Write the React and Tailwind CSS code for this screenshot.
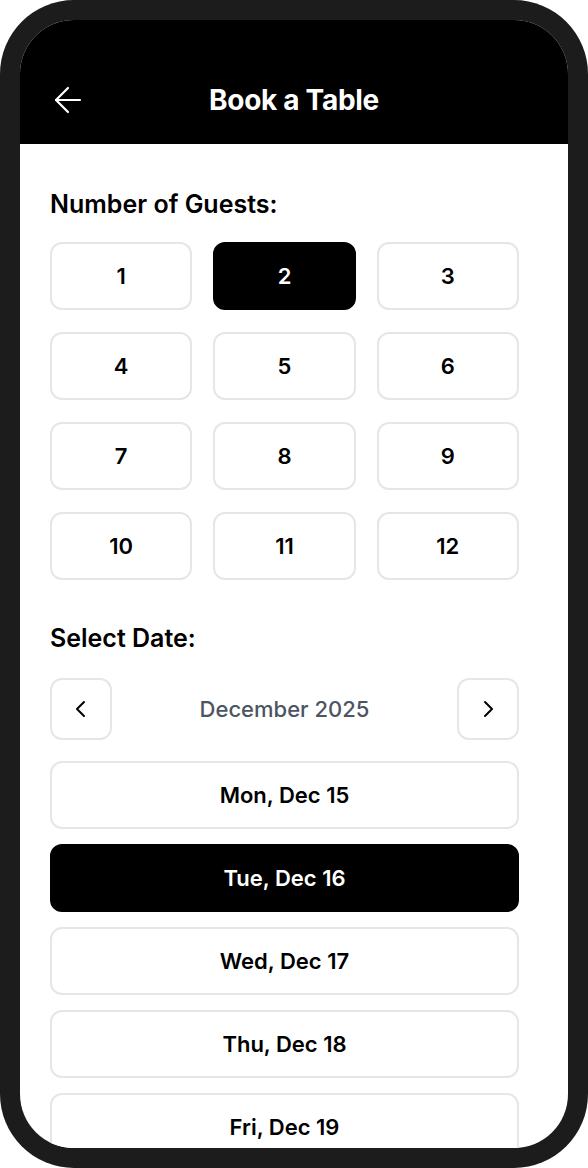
import { useState } from 'react';

const GUESTS = [1, 2, 3, 4, 5, 6, 7, 8, 9, 10, 11, 12];
const DATES = ['Mon, Dec 15', 'Tue, Dec 16', 'Wed, Dec 17', 'Thu, Dec 18', 'Fri, Dec 19'];

function Chevron({ dir }) {
  return (
    <svg width="20" height="20" viewBox="0 0 20 20" fill="none" stroke="currentColor" strokeWidth="2" strokeLinecap="round" strokeLinejoin="round">
      {dir === 'left' ? <path d="M13 3 L6 10 L13 17" /> : <path d="M7 3 L14 10 L7 17" />}
    </svg>
  );
}

export default function App() {
  const [guests, setGuests] = useState(2);
  const [date, setDate] = useState('Tue, Dec 16');

  return (
    <div className="w-[588px] h-[1168px] bg-white" style={{ fontFamily: 'Inter, "Noto Sans", sans-serif' }}>
      <div className="w-full h-full rounded-[74px] bg-[#1c1c1c] p-[20px]">
        <div className="w-full h-full rounded-[54px] bg-white overflow-hidden flex flex-col">
          {/* Header */}
          <div className="h-[124px] bg-black pt-[64px] flex-shrink-0">
            <div className="relative h-8 flex items-center justify-center">
              <button className="absolute left-[34px] top-[2px] text-white">
                <svg width="28" height="28" viewBox="0 0 28 28" fill="none" stroke="currentColor" strokeWidth="2.2" strokeLinecap="round" strokeLinejoin="round">
                  <path d="M26 14H2" />
                  <path d="M14 2 L2 14 L14 26" />
                </svg>
              </button>
              <h1 className="text-white text-[28px] font-bold tracking-[-0.3px]">Book a Table</h1>
            </div>
          </div>

          <div className="pl-[30px] pr-[49px] pt-[44px]">
            {/* Guests */}
            <h2 className="text-[25px] leading-8 font-semibold text-black mb-[22px]">Number of Guests:</h2>
            <div className="grid grid-cols-3 gap-x-[21px] gap-y-[22px]">
              {GUESTS.map(n => (
                <button key={n} onClick={() => setGuests(n)}
                  className={
                    n === guests
                      ? 'h-[68px] rounded-xl bg-black border-2 border-black text-white text-[22px] font-semibold'
                      : 'h-[68px] rounded-xl bg-white border-2 border-[#e6e6e6] text-black text-[22px] font-semibold'
                  }>
                  {n}
                </button>
              ))}
            </div>

            {/* Date */}
            <h2 className="text-[25px] leading-8 font-semibold text-black mt-[42px] mb-[24px]">Select Date:</h2>
            <div className="flex items-center justify-between">
              <button className="w-[62px] h-[62px] rounded-xl border-2 border-[#e6e6e6] flex items-center justify-center text-black">
                <Chevron dir="left" />
              </button>
              <span className="text-[22px] font-medium text-[#4b5563]">December 2025</span>
              <button className="w-[62px] h-[62px] rounded-xl border-2 border-[#e6e6e6] flex items-center justify-center text-black">
                <Chevron dir="right" />
              </button>
            </div>

            <div className="mt-[21px] flex flex-col gap-[15px]">
              {DATES.map(d => (
                <button key={d} onClick={() => setDate(d)}
                  className={
                    d === date
                      ? 'h-[68px] rounded-xl bg-black border-2 border-black text-white text-[22px] font-semibold'
                      : 'h-[68px] rounded-xl bg-white border-2 border-[#e6e6e6] text-black text-[22px] font-semibold'
                  }>
                  {d}
                </button>
              ))}
            </div>
          </div>
        </div>
      </div>
    </div>
  );
}
